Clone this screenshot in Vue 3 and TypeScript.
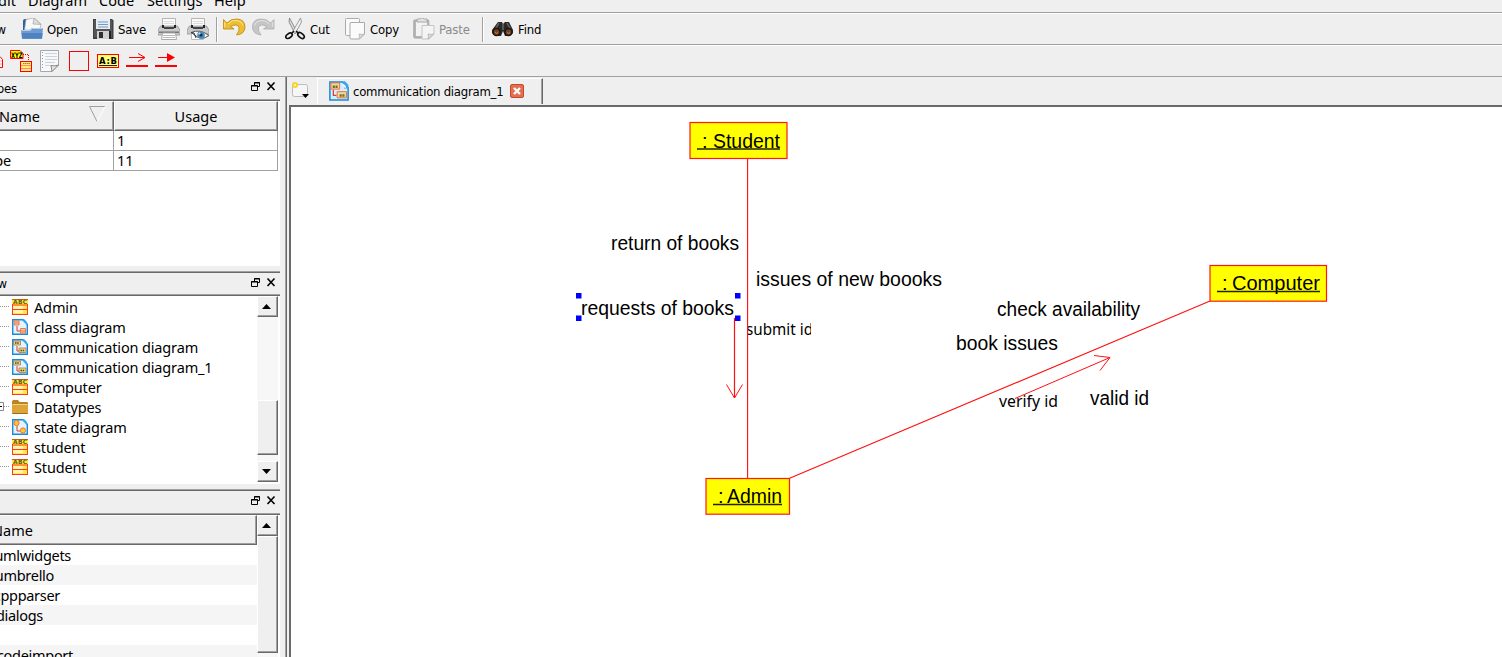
<script setup lang="ts">
interface TreeItem { name: string; kind: 'class' | 'diagram' | 'comm' | 'folder' | 'state' }
interface NodeBox { label: string; x: number; y: number; w: number; tx: number; tw: number; ux: number; base: number }
interface Caption { text: string; x: number; y: number; w: number; small?: boolean }

const menus = [
  { name: 'Edit', cls: 'm-edit' },
  { name: 'Diagram', cls: 'm-diagram' },
  { name: 'Code', cls: 'm-code' },
  { name: 'Settings', cls: 'm-settings' },
  { name: 'Help', cls: 'm-help' },
]

const tree: TreeItem[] = [
  { name: 'Admin', kind: 'class' },
  { name: 'class diagram', kind: 'diagram' },
  { name: 'communication diagram', kind: 'comm' },
  { name: 'communication diagram_1', kind: 'comm' },
  { name: 'Computer', kind: 'class' },
  { name: 'Datatypes', kind: 'folder' },
  { name: 'state diagram', kind: 'state' },
  { name: 'student', kind: 'class' },
  { name: 'Student', kind: 'class' },
]

const folders = ['umlwidgets', 'umbrello', 'cppparser', 'dialogs', '', 'codeimport']

const nodes: NodeBox[] = [
  { label: 'Student', x: 690, y: 122.5, w: 97, tx: 713, tw: 67, ux: 697, base: 147.5 },
  { label: 'Computer', x: 1210, y: 265.5, w: 116.5, tx: 1232, tw: 88, ux: 1217, base: 290 },
  { label: 'Admin', x: 706, y: 478.5, w: 83.5, tx: 727, tw: 55, ux: 713, base: 503 },
]

const captions: Caption[] = [
  { text: 'return of books', x: 611, y: 250, w: 128 },
  { text: 'issues of new boooks', x: 756, y: 286, w: 186 },
  { text: 'requests of books', x: 581, y: 315, w: 153 },
  { text: 'check availability', x: 997, y: 316, w: 143 },
  { text: 'book issues', x: 956, y: 350, w: 102 },
  { text: 'valid id', x: 1090, y: 405, w: 59 },
  { text: 'verify id', x: 999, y: 407, w: 59, small: true },
]

const handles = [[576, 293], [735, 293], [576, 315.5], [735, 315.5]]
</script>

<template>
  <div class="window">
    <nav class="menu"><span v-for="m in menus" :key="m.name" :class="m.cls">{{ m.name }}</span></nav>

    <div class="bar main-bar">
      <div class="tool new"><span>New</span></div>
      <div class="tool">
        <svg width="22" height="22" viewBox="0 0 22 22">
          <path d="M2 12V3q0-2 2-2h3l2 3h9v8z" fill="#2f5f99" />
          <path d="M3.500 12L5 1.500 13 0l7 6-1 6z" fill="#f8f8f8" stroke="#aaa" stroke-width=".7" /><path d="M13 0l-1 6 8 .5z" fill="#ddd" stroke="#999" stroke-width=".6" />
          <path d="M0 12h9l2-2h11l-1 11H1z" fill="#6d9bd2" /><path d="M.7 15h20.800l-.5 5.500H1.200z" fill="#4f83c0" /><path d="M.5 12.500h9l2-2h10" fill="none" stroke="#b4cdeb" />
        </svg><span>Open</span>
      </div>
      <div class="tool">
        <svg width="21" height="22" viewBox="0 0 21 22">
          <path d="M1 1h18l1.500 1.500V21H0V1z" fill="#414141" /><path d="M1 2h18v17H1z" fill="#565656" />
          <path d="M3 1h14v10H3z" fill="#e5edf6" /><path d="M5 4h10M5 6.500h10M5 9h10" stroke="#7998ba" />
          <path d="M4 13h12v8H4z" fill="#cfcfcf" /><path d="M6 14h4v6H6z" fill="#303030" /><path d="M16 13h2v8h-2z" fill="#222" />
        </svg><span>Save</span>
      </div>
      <div class="tool">
        <svg width="22" height="22" viewBox="0 0 22 22">
          <path d="M4.500.5h13V9h-13z" fill="#fafafa" stroke="#b5b5b5" /><path d="M6 3.500h10M6 5.500h10" stroke="#ddd" />
          <path d="M2.500 8h17l2.500 4v5H0v-5z" fill="#c9c9c9" stroke="#8a8a8a" stroke-width=".7" /><path d="M4 7h2v3H4zM16 7h2v3h-2z" fill="#222" /><path d="M6 9h10v2H6z" fill="#444" /><path d="M1 13.500h20v1.500H1z" fill="#777" /><path d="M4.500 15h13l1 6.500h-15z" fill="#fff" stroke="#aaa" /><path d="M5 17.500h12M5 19.500h12" stroke="#bbb" />
        </svg>
      </div>
      <div class="tool">
        <svg width="22" height="22" viewBox="0 0 22 22">
          <path d="M4.500.5h13V9h-13z" fill="#fafafa" stroke="#b5b5b5" /><path d="M6 3.500h10M6 5.500h10" stroke="#ddd" />
          <path d="M2.500 8h17l2.500 4v4H0v-4z" fill="#c9c9c9" stroke="#8a8a8a" stroke-width=".7" /><path d="M4 7h2v3H4zM16 7h2v3h-2z" fill="#222" /><path d="M6 9h10v2H6z" fill="#444" /><path d="M4.500 15h12v6.500h-12z" fill="#fff" stroke="#bbb" />
          <path d="M4 14.500q9-4 18 3-8 6-15-1z" fill="#f2f6f9" stroke="#555" stroke-width="1" /><circle cx="14" cy="17" r="3.800" fill="#4a88b8" /><circle cx="14" cy="17" r="1.600" fill="#12314b" /><circle cx="12.500" cy="15.500" r="1" fill="#d8efff" /><path d="M4 14.500l3 .5 2 5" stroke="#333" fill="none" />
        </svg>
      </div>
      <i class="sep"></i>
      <div class="tool">
        <svg width="23" height="22" viewBox="0 0 23 22">
          <path d="M.5 1.500V11H11L7.500 8.500q7-3.500 8.500 1 .8 3-2.500 7.500 8.500-1 8.500-8Q22 1.500 14 1 8 .5 4 5z" fill="#eebd30" stroke="#bd850d" stroke-width=".8" /><path d="M1.700 4v5M5 6q4-4.500 9-3.500 5 .5 6 5" fill="none" stroke="#ffe688" />
        </svg>
      </div>
      <div class="tool">
        <svg width="23" height="22" viewBox="0 0 23 22">
          <path d="M22 1.500V11H11.500L15 8.500q-7-3.500-8.500 1-.8 3 2.500 7.500Q.5 16 .5 9 .5 1.500 8.500 1 14.500.5 18.500 5z" fill="#c6c6c6" stroke="#adadad" stroke-width=".8" /><path d="M20.800 4v5M17.500 6q-4-4.500-9-3.500-5 .5-6 5" fill="none" stroke="#e4e4e4" />
        </svg>
      </div>
      <div class="tool">
        <svg width="21" height="22" viewBox="0 0 21 22">
          <path d="M4.500 0l7.500 14-2 1.500L4 4z" fill="#ddd" stroke="#777" stroke-width=".8" /><path d="M15.500 0L8 13l2 3L16.500 4z" fill="#f1f1f1" stroke="#888" stroke-width=".8" />
          <path d="M9 13l-2 2M11 13l3 2.500" stroke="#111" stroke-width="1.600" /><ellipse cx="4" cy="17.800" rx="3.600" ry="2.100" transform="rotate(-35 4 17.800)" fill="none" stroke="#111" stroke-width="1.700" /><ellipse cx="16" cy="17.500" rx="3.800" ry="2.100" transform="rotate(40 16 17.500)" fill="none" stroke="#111" stroke-width="1.700" />
        </svg><span>Cut</span>
      </div>
      <div class="tool">
        <svg width="21" height="22" viewBox="0 0 21 22">
          <rect x=".5" y=".5" width="14" height="17" rx="1" fill="#fafafa" stroke="#aaa" /><path d="M6 4.500h13.500V16l-5 5H6q-1 0-1-1V5z" fill="#fafafa" stroke="#aaa" /><path d="M14 21q1-2 0-5 3 1 5.500 0z" fill="#ddd" stroke="#bbb" />
        </svg><span>Copy</span>
      </div>
      <div class="tool disabled">
        <svg width="22" height="22" viewBox="0 0 22 22">
          <rect x=".8" y="2" width="15" height="18" rx="1" fill="#b6b6b6" stroke="#a5a5a5" /><rect x="3" y="4" width="11" height="14" fill="#f2f2f2" /><path d="M4 4V1h3l1-1h2l1 1h3v3z" fill="#e2e2e2" stroke="#aaa" /><path d="M9 7.500h12V16l-5 5H9z" fill="#f4f4f4" stroke="#c4c4c4" /><path d="M15 21q1-2 0-5 3 1 6 0z" fill="#ddd" stroke="#bbb" />
        </svg><span>Paste</span>
      </div>
      <i class="sep"></i>
      <div class="tool">
        <svg width="22" height="22" viewBox="0 0 22 22">
          <path d="M6 4h4l1 2 2-2h4l4 8v3l-4 3h-4l-2-5-2 5H4l-4-3v-3z" fill="#292929" /><path d="M7 5l-4 7M15 5l4 7M11 6v6" stroke="#666" stroke-width="1.500" />
          <circle cx="4.500" cy="14" r="3.500" fill="#74401e" stroke="#161616" stroke-width="1.500" /><circle cx="16.500" cy="14" r="3.500" fill="#74401e" stroke="#161616" stroke-width="1.500" /><path d="M3 14.500q2 2 3 0M15 14.500q2 2 3 0" stroke="#d58345" fill="none" />
        </svg><span>Find</span>
      </div>
    </div>

    <div class="bar draw-bar">
      <svg width="10" height="26" viewBox="0 0 10 26"><path d="M0 8.500l2.500 3v8H0" fill="#fff" stroke="#f00" /><path d="M0 13h2M0 16h2" stroke="#f99" /></svg>
      <svg width="30" height="26" viewBox="0 0 30 26">
        <path d="M.5 2.500H10l3 3v5H.5z" fill="#ff0" stroke="#f00" /><text x="1" y="9.500" font-size="7.500" font-weight="700" font-family="DejaVu Sans" textLength="11.500" lengthAdjust="spacingAndGlyphs">XYZ</text><path d="M13 6.500h5.500V13" fill="none" stroke="#f00" stroke-dasharray="1 1" />
        <rect x="10.500" y="13.500" width="11" height="10" fill="#ffee70" stroke="#f00" /><path d="M11 17.500h10M11 20.500h10" stroke="#f88" /><path d="M13 15.500h7" stroke="#998a20" stroke-dasharray="1.500 .5" />
      </svg>
      <svg width="29" height="26" viewBox="0 0 29 26"><path d="M.5 2.500h18V17L12 23.500H.5z" fill="#f7f8fa" stroke="#a4a8af" /><path d="M5 5.500h12M5 8.500h12M5 11.500h12M5 14.500h10M5 17.500h6" stroke="#cdd2da" /><path d="M2.500 4v18" stroke="#999" stroke-dasharray="1 2" /><path d="M12 23.500l-1-6q4 1 7.500-.5z" fill="#e4e4e4" stroke="#888" /></svg>
      <svg width="28" height="26" viewBox="0 0 28 26"><rect x=".5" y="3.500" width="19" height="19" fill="none" stroke="#f00" /></svg>
      <svg width="29" height="26" viewBox="0 0 29 26"><rect x=".5" y="6.500" width="21" height="13" fill="#ff7" stroke="#f00" /><text x="2" y="15.500" font-size="8.500" font-weight="700" font-family="DejaVu Sans" textLength="18">A:B</text><path d="M2 17.500h18" stroke="#222" /></svg>
      <svg width="29" height="26" viewBox="0 0 29 26"><path d="M0 18h22" stroke="#f00" stroke-width="2" /><path d="M3 9.500h16M12 5.500l7 4-7 4" stroke="#f00" fill="none" /></svg>
      <svg width="29" height="26" viewBox="0 0 29 26"><path d="M0 18h22" stroke="#f00" stroke-width="2" /><path d="M3 9.500h10" stroke="#f00" /><path d="M12 5l8 4.500-8 4.500z" fill="#f00" /></svg>
    </div>

    <div class="body">
      <aside class="docks">
        <section class="dock types">
          <header class="title"><span>Stereotypes</span>
            <svg width="26" height="12" viewBox="0 0 26 12"><path d="M3.500 4V1.500h5v4H6.500M3 2h6" fill="none" stroke="#000" /><path d="M.5 4.500h6v5h-6zM0 5h7" fill="none" stroke="#000" /><path d="M16.500 1.500l7 7.500M23.500 1.500l-7 7.500" stroke="#000" stroke-width="1.600" /></svg>
          </header>
          <div class="grid">
            <div class="head first"><span>Name</span><svg width="17" height="17" viewBox="0 0 17 17"><path d="M16 .5H.5l7.500 15" fill="none" stroke="#a0a0a0" /><path d="M16 .5L8 15.500" stroke="#fff" /></svg></div>
            <div class="head usage">Usage</div>
            <div class="cell"></div><div class="cell num">1</div>
            <div class="cell"><span class="cut">datatype</span></div><div class="cell num">11</div>
          </div>
        </section>

        <section class="dock tree-dock">
          <header class="title"><span class="view">Tree View</span>
            <svg width="26" height="12" viewBox="0 0 26 12"><path d="M3.500 4V1.500h5v4H6.500M3 2h6" fill="none" stroke="#000" /><path d="M.5 4.500h6v5h-6zM0 5h7" fill="none" stroke="#000" /><path d="M16.500 1.500l7 7.500M23.500 1.500l-7 7.500" stroke="#000" stroke-width="1.600" /></svg>
          </header>
          <div class="split">
            <ul class="tree">
              <li v-for="t in tree" :key="t.name">
                <svg class="branch" width="12" height="20" viewBox="0 0 12 20"><path d="M0 9.500h9" stroke="#999" stroke-dasharray="1 1" /><path v-if="t.kind === 'folder'" d="M-1 5.500h4.500v8H-1" fill="#fff" stroke="#888" /><path v-if="t.kind === 'folder'" d="M0 9.500h2" stroke="#000" /></svg>
                <svg width="16" height="16" viewBox="0 0 16 16">
                  <g v-if="t.kind === 'class'"><rect width="16" height="16" fill="#ffe94a" /><path d="M1 7h10v7H1z" fill="#fff7b0" /><path d="M0 .5h16" stroke="#cc5a20" /><path d="M.5 5v11M15.500 5v11M0 6h16M0 10.500h16M0 15.500h16" stroke="#ff3a20" /><text x="1" y="5.300" font-size="6" font-weight="700" font-family="DejaVu Sans" fill="#665c10" textLength="14">ABC</text></g>
                  <g v-else-if="t.kind === 'folder'"><path d="M0 3q0-2 1.500-2H6l1.500 2H15q1 0 1 1.500V14H0z" fill="#b98524" /><path d="M0 5h16v9q0 1-1 1H1q-1 0-1-1z" fill="#dba53a" /><path d="M.5 5.500h15" stroke="#f7d27c" /><path d="M.5 14.500h15" stroke="#9a6c19" /></g>
                  <g v-else>
                    <path d="M.7.7H11l4.300 4.500v10H.7z" fill="#e2f4fe" stroke="#168bdd" stroke-width="1.400" /><path d="M10 1l5 5v-3l-3-3z" fill="#39a6ee" /><path d="M5 7v5h3" fill="none" stroke="#e33b2c" />
                    <g v-if="t.kind === 'state'"><circle cx="4.500" cy="4" r="2.600" fill="#ffc82e" stroke="#ee6d39" /><circle cx="11" cy="11.500" r="2.600" fill="#ffc82e" stroke="#ee6d39" /></g>
                    <g v-else-if="t.kind === 'comm'"><path d="M1.500 2h7v4h-7zM7 9h7v4.500H7z" fill="#ead982" stroke="#b8743f" stroke-width=".8" /><path d="M3 4h4M8.500 11.500h4" stroke="#474d20" stroke-width="1.500" stroke-dasharray="1.500 .7" /></g>
                    <g v-else><path d="M2 2h5v4H2zM8.500 9.500h5V14h-5z" fill="#ffc8a0" stroke="#ef7847" /><path d="M2 4h5M8.500 12h5" stroke="#ef7847" /></g>
                  </g>
                </svg>
                <span>{{ t.name }}</span>
              </li>
            </ul>
            <div class="scroll">
              <b class="btn"><svg width="9" height="5" viewBox="0 0 9 5"><path d="M4.500 0L9 5H0z" /></svg></b><b class="track"></b><b class="thumb"></b><b class="gap"></b>
              <b class="btn"><svg width="9" height="5" viewBox="0 0 9 5"><path d="M4.500 5L9 0H0z" /></svg></b>
            </div>
          </div>
        </section>

        <section class="dock files">
          <header class="title"><span></span>
            <svg width="26" height="12" viewBox="0 0 26 12"><path d="M3.500 4V1.500h5v4H6.500M3 2h6" fill="none" stroke="#000" /><path d="M.5 4.500h6v5h-6zM0 5h7" fill="none" stroke="#000" /><path d="M16.500 1.500l7 7.500M23.500 1.500l-7 7.500" stroke="#000" stroke-width="1.600" /></svg>
          </header>
          <div class="split">
            <div class="list">
              <div class="head"><span class="name">Name</span></div>
              <div v-for="(f, i) in folders" :key="i" class="file"><span :class="'f' + i">{{ f }}</span></div>
            </div>
            <div class="scroll">
              <b class="btn"><svg width="9" height="5" viewBox="0 0 9 5"><path d="M4.500 0L9 5H0z" /></svg></b><b class="thumb long"></b><b class="track"></b>
            </div>
          </div>
        </section>
      </aside>

      <main class="work">
        <div class="tabs">
          <svg class="add" width="20" height="17" viewBox="0 0 20 17"><rect x="1.500" y="2.500" width="15" height="12" rx="2" fill="#f6f6f6" stroke="#bbb" /><circle cx="4" cy="3" r="3" fill="#f5d22c" /><circle cx="4" cy="3" r="1.200" fill="#fff2a0" /><path d="M11 12h7l-3.500 4z" fill="#000" /></svg>
          <div class="tab">
            <svg width="20" height="20" viewBox="0 0 16 16"><path d="M.7.7H11l4.300 4.500v10H.7z" fill="#d3effd" stroke="#168bdd" stroke-width="1.200" /><path d="M10 1q3 2 2 5h3.500v-3l-3-3z" fill="#39a6ee" /><path d="M11 3q2 0 2 2.500" stroke="#fff" fill="none" /><path d="M3.500 7v4.500H6" fill="none" stroke="#e33b2c" /><path d="M1.500 1.500h7v5h-7zM6.500 8.500h7.500v5H6.500z" fill="#efd79a" stroke="#ee7146" stroke-width=".8" /><path d="M3 4.500h4M8.500 11.500h4" stroke="#66752a" stroke-width="2" stroke-dasharray="1.700 .5" /></svg>
            <span>communication diagram_1</span>
            <svg class="close" width="14" height="14" viewBox="0 0 14 14"><rect x=".5" y=".5" width="13" height="13" rx="1.500" fill="#e07050" stroke="#c8492c" /><path d="M4 4l6 6M10 4l-6 6" stroke="#fff" stroke-width="2.400" /></svg>
          </div>
        </div>
        <div class="canvas">
          <svg width="1211" height="550" viewBox="291 107 1211 550">
            <defs><clipPath id="label-area"><rect x="747" y="318" width="64" height="22" /></clipPath></defs>
            <g clip-path="url(#label-area)"><text class="small" x="746" y="335" textLength="67" lengthAdjust="spacingAndGlyphs">submit id</text></g>
            <g fill="none" stroke="#ff1010">
              <path d="M747.600 158V479M789 478.500L1210 301" stroke-width="1.100" />
              <path d="M734.500 318V398" stroke-width="1.200" /><path d="M726.500 384.500l8 13.500 8-13.500M1015 398.500L1110 357.500M1094 355.500l16 2-10 13" />
            </g>
            <g v-for="n in nodes" :key="n.label">
              <rect :x="n.x" :y="n.y" :width="n.w" :height="n.y === 122.5 ? 36 : 35.7" fill="#ff0" stroke="#ff1818" stroke-width="1.200" />
              <text class="big" :x="n.ux + 5" :y="n.base">:</text>
              <text class="big" :x="n.tx" :y="n.base" :textLength="n.tw" lengthAdjust="spacingAndGlyphs">{{ n.label }}</text>
              <path :d="`M${n.ux} ${n.base + 1.5}H${n.tx + n.tw}`" stroke="#222200" stroke-width="1.300" />
            </g>
            <text v-for="c in captions" :key="c.text" :class="c.small ? 'small' : 'big'" :x="c.x" :y="c.y" :textLength="c.w" lengthAdjust="spacingAndGlyphs">{{ c.text }}</text>
            <rect v-for="(h, i) in handles" :key="i" :x="h[0]" :y="h[1]" width="5.500" height="5.500" fill="#00f" />
          </svg>
        </div>
      </main>
    </div>
  </div>
</template>

<style>
html, body { overflow: hidden; }
</style>

<style scoped>
* { box-sizing: border-box; }
.window { width: 1502px; height: 657px; overflow: hidden; background: #efefef; color: #000; display: flex; flex-direction: column; font: 14.5px/20px "Noto Sans", "Open Sans", sans-serif; letter-spacing: -.15px; white-space: nowrap; }
.menu { flex: none; height: 13px; border-bottom: 1px solid #a0a0a0; overflow: hidden; display: grid; grid-template-columns: 28px 71px 48px 67px 60px; line-height: 20px; letter-spacing: .05px; }
.menu span { margin-top: -10px; }
.m-edit { justify-self: end; padding-right: 12px; }
.bar { flex: none; height: 32px; border-top: 1px solid #fff; border-bottom: 1px solid #a0a0a0; }
.main-bar { display: grid; grid-template-columns: 21px 72px 65px 29px 29px 7px 29px 33px 60px 68px 69px 10px 80px; font: 13px/20px "DejaVu Sans Condensed", "Noto Sans", sans-serif; }
.tool { display: flex; align-items: center; min-width: 0; }
.tool svg { flex: none; margin-right: 4px; }
.tool span { padding-top: 2px; }
.new { justify-content: flex-end; padding-right: 15px; }
.disabled { color: #8a8a8a; }
.sep { width: 2px; height: 25px; margin-top: 3px; border-left: 1px solid #a0a0a0; border-right: 1px solid #fff; }
.draw-bar { display: flex; align-items: center; letter-spacing: 0; }
.draw-bar svg { flex: none; }
.body { flex: 1; min-height: 0; display: flex; }
.docks { width: 285px; flex: none; overflow: hidden; padding-right: 5px; display: flex; flex-direction: column; }
.dock { flex: none; display: flex; flex-direction: column; }
.types { height: 194px; }
.tree-dock { height: 218px; border-top: 1px solid #a0a0a0; }
.files { height: 168px; border-top: 1px solid #a0a0a0; }
.title { flex: none; height: 24px; border-bottom: 1px solid #696969; box-shadow: inset 0 -1px #a0a0a0; display: flex; align-items: center; justify-content: space-between; padding-right: 3px; font: 13px/20px "DejaVu Sans Condensed", sans-serif; }
.title span { width: 17px; display: flex; justify-content: flex-end; }
.title .view { width: 7px; }
.title svg { margin-top: -3px; }
.tree-dock .title, .files .title { border-top: 1px solid #696969; }
.files .title { height: 25px; }
.grid { background: #fff; height: 165px; border-right: 2px solid #fff; display: grid; grid-template-columns: 114px 164px; grid-template-rows: 30px 20px 20px; }
.head { border-top: 1px solid #fff; border-right: 1px solid #696969; border-bottom: 1px solid #696969; background: #efefef; box-shadow: inset -1px -1px #a0a0a0; display: flex; align-items: center; letter-spacing: .05px; }
.head.first { justify-content: space-between; padding: 0 7px 1px 0; }
.head.first span { margin-left: -1px; }
.head.first svg { margin-top: -3px; }
.head.usage { justify-content: center; padding-bottom: 1px; border-left: 1px solid #fff; }
.cell { border-right: 1px solid #a0a0a0; border-bottom: 1px solid #a0a0a0; overflow: hidden; line-height: 18px; }
.num { padding-left: 3px; }
.cut { width: 11px; display: flex; justify-content: flex-end; }
.split { display: flex; flex: 1; min-height: 0; background: #fff; }
.tree-dock .split { flex: none; height: 188px; }
.tree { list-style: none; margin: 0; padding: 1px 0 0; flex: 1; }
.tree li { height: 20px; display: flex; align-items: center; }
.tree svg { flex: none; }
.tree li span { margin-left: 6px; }
.scroll { width: 21px; margin-right: 2px; display: flex; flex-direction: column; }
.tree-dock .scroll { height: 186px; }
.btn, .thumb { flex: none; background: #efefef; border: 1px solid #fff; border-right-color: #696969; border-bottom-color: #696969; box-shadow: inset -1px -1px #a0a0a0; }
.btn { height: 21px; display: flex; align-items: center; justify-content: center; }
.btn svg { margin: 0 2px 0 0; }
.track, .gap { background: #f7f7f7; }
.track { flex: 1; }
.thumb { height: 55px; }
.gap { height: 6px; flex: none; }
.long { height: 117px; }
.list { flex: 1; overflow: hidden; letter-spacing: -.3px; }
.list .head { height: 30px; }
.file { height: 20px; }
.list .file:nth-child(odd) { background: #f5f5f5; }
.head .name { width: 33px; display: flex; justify-content: flex-end; }
.file span { display: flex; justify-content: flex-end; }
.f0 { width: 71px; } .f1 { width: 54px; } .f2 { width: 60px; } .f3 { width: 43px; } .f5 { width: 73px; }
.work { flex: 1; min-width: 0; border-left: 1px solid #a0a0a0; box-shadow: inset 1px 0 #696969; padding-left: 3px; display: flex; flex-direction: column; }
.tabs { height: 28px; flex: none; display: flex; }
.add { margin: 5px 6px 0 2px; flex: none; }
.tab { width: 226px; height: 26px; margin-top: 1px; border-top: 1px solid #fff; border-left: 1px solid #fff; border-right: 1px solid #696969; box-shadow: inset -1px 0 #a0a0a0; display: flex; align-items: center; padding-left: 11px; font: 13px/20px "DejaVu Sans Condensed", sans-serif; letter-spacing: -.25px; }
.tab svg { margin-top: -2px; }
.tab span { margin-left: 4px; }
.tab .close { margin-left: 7px; }
.canvas { flex: 1; border: solid #696969; border-width: 2px 0 0 2px; background: #fff; overflow: hidden; letter-spacing: 0; }
.canvas svg { display: block; }
.big { font: 20px "Liberation Sans", Arial, sans-serif; }
.small { font: 16px "Noto Sans", sans-serif; }
</style>
